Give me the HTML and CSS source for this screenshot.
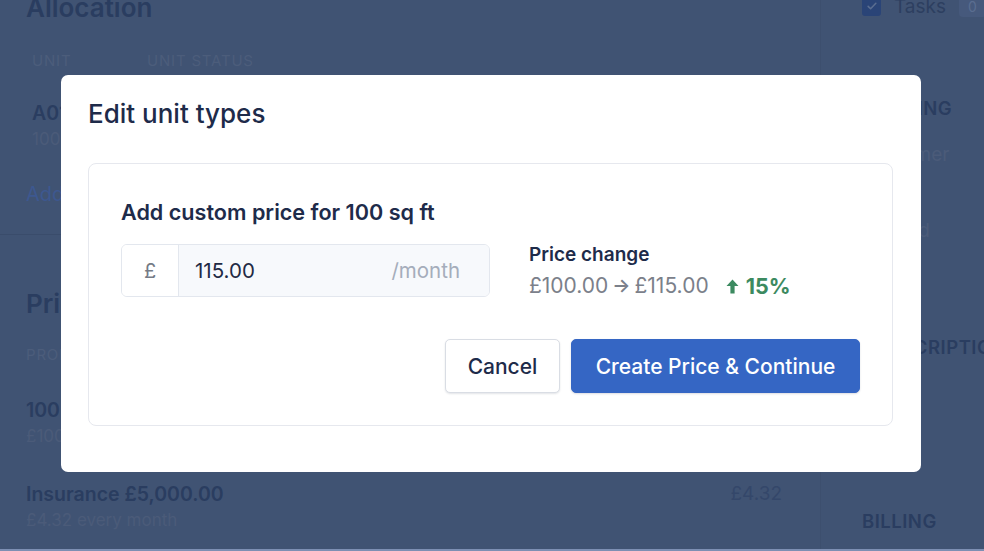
FILE: index.html
```html
<!DOCTYPE html>
<html lang="en">
<head>
<meta charset="utf-8">
<title>Edit unit types</title>
<link rel="stylesheet" href="styles.css">
</head>
<body>
<div class="page">
  <main class="main">
    <h1 class="bg-heading alloc">Allocation</h1>
    <div class="bg-table-head">
      <span class="th th-unit">Unit</span>
      <span class="th">Unit status</span>
    </div>
    <div class="bg-row">
      <div class="bg-strong">A01</div>
      <div class="bg-muted">100 sq ft</div>
    </div>
    <div class="bg-link">Add unit</div>
    <hr class="bg-divider">
    <h2 class="bg-heading prices">Prices</h2>
    <div class="th th-pro">Product</div>
    <div class="bg-item">
      <div class="bg-strong">100 sq ft £100.00</div>
      <div class="bg-muted">£100.00 every month</div>
    </div>
    <div class="bg-item bg-item-row">
      <div>
        <div class="bg-strong">Insurance £5,000.00</div>
        <div class="bg-muted">£4.32 every month</div>
      </div>
      <div class="bg-amount">£4.32</div>
    </div>
  </main>
  <aside class="side">
    <div class="tasks">
      <span class="checkbox"><svg viewBox="0 0 20 20" width="14" height="14"><path d="M4.5 10.5l3.5 3.5 7.5-8" fill="none" stroke="#5a6d90" stroke-width="2.2" stroke-linecap="round" stroke-linejoin="round"/></svg></span>
      <span class="tasks-label">Tasks</span>
      <span class="badge">0</span>
    </div>
    <div class="side-heading sh-1">BOOKING</div>
    <div class="side-text st-1">Customer</div>
    <div class="side-text st-2">Booked</div>
    <div class="side-heading sh-2">SUBSCRIPTION</div>
    <div class="side-heading sh-3">BILLING</div>
  </aside>
</div>

<div class="overlay">
  <div class="modal" role="dialog">
    <h2 class="modal-title">Edit unit types</h2>
    <div class="card">
      <h3 class="card-title">Add custom price for 100 sq ft</h3>
      <div class="price-row">
        <div class="input-group">
          <span class="prefix">£</span>
          <div class="input">
            <span class="value">115.00</span>
            <span class="suffix">/month</span>
          </div>
        </div>
        <div class="change">
          <div class="change-label">Price change</div>
          <div class="change-values">
            <span class="old">£100.00</span>
            <span class="arrow">→</span>
            <span class="new">£115.00</span>
            <span class="pct">
              <svg class="up" viewBox="0 0 13 15" width="13" height="15"><path d="M6.5 0.5L12.5 7H8.6V14.5H4.4V7H0.5Z" fill="#3c8a60"/></svg>
              <span>15%</span>
            </span>
          </div>
        </div>
      </div>
      <div class="actions">
        <button class="btn btn-secondary">Cancel</button>
        <button class="btn btn-primary">Create Price &amp; Continue</button>
      </div>
    </div>
  </div>
</div>
</body>
</html>
```

FILE: styles.css
```css
* { box-sizing: border-box; }
html, body { margin: 0; padding: 0; }
body {
  width: 984px;
  height: 551px;
  overflow: hidden;
  background: #405373;
  font-family: Inter, "Noto Sans", "Liberation Sans", sans-serif;
  color: #26385a;
  position: relative;
}

/* ---------- dimmed background page ---------- */
.page {
  display: flex;
  height: 551px;
  border-bottom: 2px solid #7d8fb3;
}
.main {
  flex: none;
  width: 820px;
  padding: 0 0 0 26px;
}
.bg-heading {
  margin: 0;
  font-size: 26px;
  font-weight: 600;
  color: #2a3d60;
  line-height: 32px;
}
.alloc { margin-top: -8px; }
.bg-table-head {
  display: flex;
  margin-top: 27px;
  padding-left: 6px;
}
.th {
  font-size: 15px;
  letter-spacing: 0.8px;
  text-transform: uppercase;
  color: #4c5d7b;
  line-height: 20px;
}
.th-unit { width: 115px; }
.bg-row { padding-left: 6px; margin-top: 30px; }
.bg-strong {
  font-size: 19.5px;
  font-weight: 600;
  color: #2a3d60;
  line-height: 24px;
}
.bg-muted {
  font-size: 17px;
  color: #4b5b79;
  line-height: 28px;
}
.bg-link {
  margin-top: 29px;
  font-size: 20px;
  color: #3d5890;
  line-height: 24px;
}
.bg-divider {
  margin: 28px 0 0 -26px;
  border: 0;
  border-top: 1px solid #3a4c6b;
  width: 790px;
}
.prices { margin-top: 53px; }
.th-pro { margin-top: 25px; }
.bg-item { margin-top: 33px; }
.bg-item-row {
  display: flex;
  justify-content: space-between;
  width: 756px;
  margin-top: 32px;
}
.bg-amount {
  font-size: 19px;
  color: #34476a;
  line-height: 24px;
}

.side {
  flex: 1;
  min-width: 0;
  overflow: hidden;
  border-left: 1px solid #3d4f6e;
  padding-left: 41px;
}
.tasks {
  display: flex;
  align-items: center;
  gap: 13px;
  margin-top: -5px;
  height: 22px;
}
.checkbox {
  flex: none;
  width: 19px;
  height: 19px;
  border-radius: 3px;
  background: #2a4477;
  display: flex;
  align-items: center;
  justify-content: center;
}
.tasks-label {
  font-size: 19px;
  color: #2d3f60;
}
.badge {
  background: #46597c;
  color: #5a6d90;
  font-size: 14px;
  padding: 2px 9px;
  border-radius: 4px;
}
.side-heading {
  font-size: 18.5px;
  font-weight: 600;
  letter-spacing: 0.5px;
  color: #2a3d60;
  line-height: 22px;
  white-space: nowrap;
}
.side-text {
  font-size: 19px;
  color: #4b5b79;
  line-height: 24px;
}
.sh-1 { margin-top: 80px; }
.st-1 { margin-top: 24px; }
.st-2 { margin-top: 52px; }
.sh-2 { margin-top: 93px; }
.sh-3 { margin-top: 152px; }

/* ---------- modal ---------- */
.overlay {
  position: absolute;
  inset: 0;
  display: flex;
  justify-content: center;
  align-items: flex-start;
  padding-top: 75px;
}
.modal {
  width: 860px;
  margin-left: -2px;
  background: #ffffff;
  border-radius: 7px;
  padding: 22px 28px 46px 27px;
}
.modal-title {
  margin: 0;
  font-size: 26px;
  font-weight: 500;
  color: #1e2b4a;
  line-height: 34px;
}
.card {
  margin-top: 32px;
  border: 1px solid #e6e8ee;
  border-radius: 8px;
  padding: 35px 32px 32px 32px;
}
.card-title {
  margin: 0;
  font-size: 21.6px;
  font-weight: 600;
  color: #1e2b4a;
  line-height: 26px;
}
.price-row {
  display: flex;
  gap: 39px;
  margin-top: 19px;
}
.input-group {
  flex: none;
  display: flex;
  width: 369px;
  height: 53px;
  border: 1px solid #e3e7ee;
  border-radius: 6px;
  overflow: hidden;
}
.prefix {
  width: 57px;
  flex: none;
  display: flex;
  align-items: center;
  justify-content: center;
  font-size: 20px;
  color: #757b86;
  border-right: 1px solid #e3e7ee;
  background: #fff;
}
.input {
  flex: 1;
  background: #f7f9fc;
  display: flex;
  align-items: center;
  justify-content: space-between;
  padding: 0 29px 0 16px;
}
.value {
  font-size: 20.5px;
  color: #1f2a44;
}
.suffix {
  font-size: 20.5px;
  color: #a5adbb;
}
.change { margin-top: -1px; }
.change-label {
  font-size: 19px;
  font-weight: 600;
  color: #1e2b4a;
  line-height: 24px;
}
.change-values {
  margin-top: 5px;
  display: flex;
  align-items: center;
  font-size: 21px;
  color: #7b808a;
  line-height: 28px;
}
.arrow {
  font-size: 19px;
  font-weight: 600;
  margin: 0 4px 0 4px;
  color: #7b808a;
}
.pct {
  margin-left: 17px;
  display: flex;
  align-items: center;
  gap: 7px;
  color: #3c8a60;
  font-weight: 700;
  font-size: 21.5px;
}
.up { display: block; }
.actions {
  display: flex;
  justify-content: flex-end;
  gap: 11px;
  margin-top: 39px;
}
.btn {
  font-family: Inter, "Noto Sans", "Liberation Sans", sans-serif;
  font-size: 21px;
  font-weight: 500;
  height: 54px;
  border-radius: 5px;
  cursor: pointer;
}
.btn-secondary {
  width: 115px;
  background: #fff;
  color: #1e2b4a;
  border: 1px solid #d9dde4;
  box-shadow: 0 1px 2px rgba(20, 30, 60, 0.12);
}
.btn-primary {
  width: 289px;
  background: #3566c4;
  color: #ffffff;
  border: 1px solid #3566c4;
  box-shadow: 0 1px 2px rgba(20, 30, 60, 0.15);
}
```
